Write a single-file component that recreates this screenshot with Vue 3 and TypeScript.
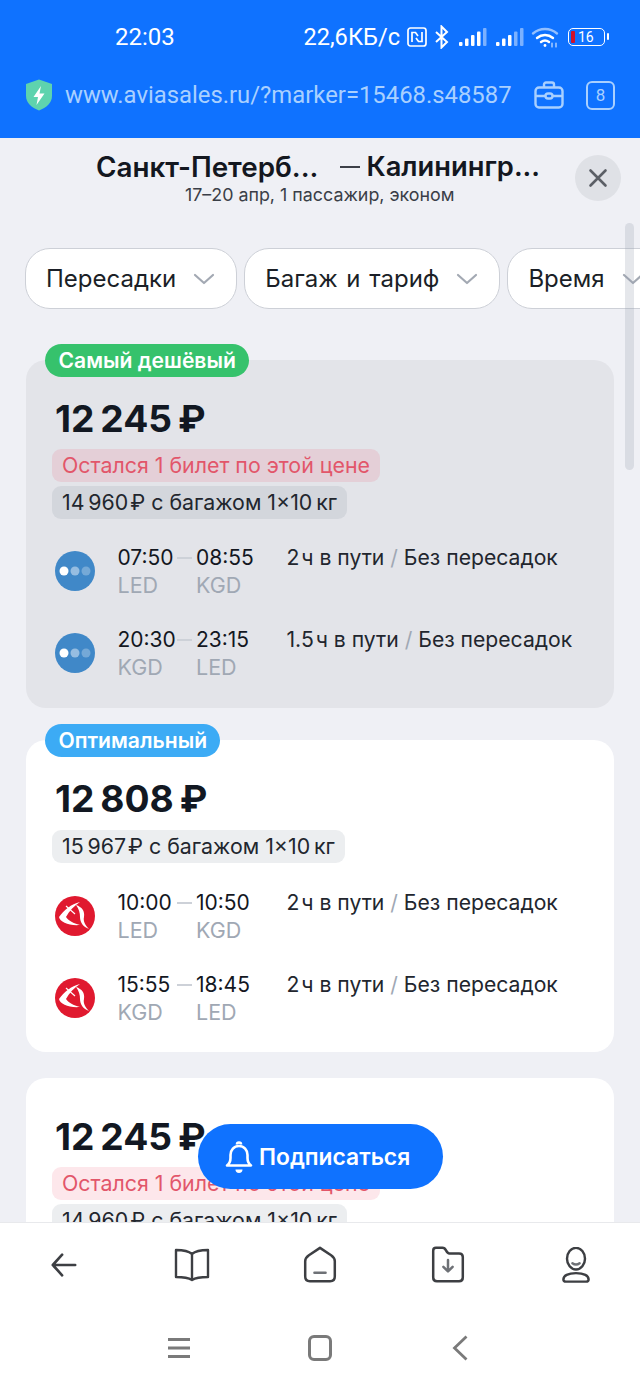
<template>
  <div class="phone">
    <header class="topbar">
      <div class="status">
        <span class="clock">22:03</span>
        <div class="status-right">
          <span class="speed">22,6КБ/с</span>
          <svg class="ic-nfc" width="20" height="20" viewBox="0 0 20 20" fill="none" stroke="#fff" stroke-width="1.7">
            <rect x="1" y="1" width="18" height="18" rx="2.5" />
            <path d="M5 15V5.500h3.500L11 9M15 5v9.500h-3.500L9 11" />
          </svg>
          <svg class="ic-bt" width="16" height="24" viewBox="0 0 16 24" fill="none" stroke="#fff" stroke-width="2">
            <path d="M2 7l11 10-5.500 5.500V1.500L13 7 2 17" />
          </svg>
          <svg v-for="n in 2" :key="n" class="ic-signal" width="28" height="18" viewBox="0 0 28 18">
            <rect x="0" y="14" width="3.500" height="4" rx="1" fill="#fff" />
            <rect x="6" y="10.500" width="3.500" height="7.500" rx="1" fill="#fff" />
            <rect x="12" y="7" width="3.500" height="11" rx="1" fill="#fff" />
            <rect x="18" y="3.500" width="3.500" height="14.500" rx="1" fill="#fff" :opacity="n === 1 ? 1 : 0.45" />
            <rect x="24" y="0" width="3.500" height="18" rx="1" fill="#fff" opacity="0.45" />
          </svg>
          <svg class="ic-wifi" width="28" height="22" viewBox="0 0 28 22" fill="none" stroke="#fff" stroke-width="2.400" stroke-linecap="round">
            <path d="M2 7.500C9 1.500 19 1.500 26 7.500" opacity="0.55" />
            <path d="M6 12c4.800-4 11.200-4 16 0" />
            <path d="M10 16c2.500-2 5.500-2 8 0" />
            <circle cx="14" cy="19.500" r="1.400" fill="#fff" stroke="none" />
            <path d="M21 17v4M25 17v4" stroke-width="1.200" opacity="0.8" />
          </svg>
          <div class="battery">
            <i class="battery-fill"></i>
            <span>16</span>
          </div>
        </div>
      </div>
      <div class="urlbar">
        <svg class="ic-shield" width="28" height="32" viewBox="0 0 28 32">
          <path d="M14 .5 27 5v12c0 7-5.500 11.500-13 14.500C6.500 28.500 1 24 1 17V5z" fill="#5ed3ae" />
          <path d="M16 7 8.500 18H13l-1.500 8L19.500 14.500H14.500z" fill="#fff" />
        </svg>
        <span class="url">www.aviasales.ru/?marker=15468.s48587</span>
        <svg class="ic-case" width="30" height="28" viewBox="0 0 30 28" fill="none" stroke="#a9d0ff" stroke-width="2.400">
          <rect x="1.500" y="6.500" width="27" height="20" rx="3.500" />
          <path d="M10 6.500V3.500A2 2 0 0 1 12 1.500h6a2 2 0 0 1 2 2v3M1.500 15H11.500M18.500 15H28.500" />
          <rect x="11.500" y="12.500" width="7" height="5" rx="2.500" />
        </svg>
        <div class="tabs">8</div>
      </div>
    </header>

    <main class="content">
      <div class="heading">
        <div class="titles">
          <div class="route">
            <span class="city">Санкт-Петерб...</span>
            <i class="route-dash"></i>
            <span class="city-to">Калинингр...</span>
          </div>
          <div class="trip">17–20 апр, 1 пассажир, эконом</div>
        </div>
        <button class="close" type="button">
          <svg width="20" height="20" viewBox="0 0 20 20" stroke="#5b5f66" stroke-width="2.600" stroke-linecap="round">
            <path d="M2.500 2.500l15 15M17.500 2.500l-15 15" />
          </svg>
        </button>
      </div>

      <div class="filters">
        <div v-for="f in filters" :key="f" class="chip">
          <span>{{ f }}</span>
          <svg width="22" height="12" viewBox="0 0 22 12" fill="none" stroke="#a3a9b3" stroke-width="2.200" stroke-linecap="round" stroke-linejoin="round">
            <path d="M2 2l9 8 9-8" />
          </svg>
        </div>
      </div>

      <div class="list">
        <article
          v-for="t in tickets"
          :key="t.id"
          class="card"
          :class="{ 'card-muted': t.muted, 'card-tagged': t.tag }"
        >
          <span v-if="t.tag" class="tag" :class="t.tagClass">{{ t.tag }}</span>
          <div class="price">{{ t.price }}</div>
          <div class="pills">
            <span v-if="t.lastSeat" class="pill pill-red">Остался 1 билет по этой цене</span>
            <span class="pill pill-grey">{{ t.baggage }} с багажом 1×10&#8201;кг</span>
          </div>
          <div v-for="s in t.segments" :key="s.from" class="segment">
            <svg v-if="t.airline === 'dots'" class="logo" width="40" height="40" viewBox="0 0 40 40">
              <circle cx="20" cy="20" r="20" fill="#4088c8" />
              <circle cx="9" cy="20" r="4.500" fill="#fff" />
              <circle cx="20" cy="20" r="4.500" fill="#fff" opacity="0.45" />
              <circle cx="31" cy="20" r="4.500" fill="#fff" opacity="0.28" />
            </svg>
            <svg v-else class="logo" width="40" height="40" viewBox="0 0 40 40">
              <circle cx="20" cy="20" r="20" fill="#e0192f" />
              <path d="M25 6C16 8 9 14 4 21 5 26 14 30 25 29 18 27 14 25 11 21 14 15 19 10 25 6Z" fill="#fff" />
              <path d="M21 9C27 11 30 15 29 21 28 25 30 29 34 33 28 31 25 26 25 21 25 17 24 13 21 9Z" fill="#fff" />
              <path d="M11 10 20 18" stroke="#fff" stroke-width="1.200" />
            </svg>
            <div class="stop">
              <span class="time">{{ s.dep }}</span>
              <span class="code">{{ s.from }}</span>
            </div>
            <i class="dash"></i>
            <div class="stop stop-arr">
              <span class="time">{{ s.arr }}</span>
              <span class="code">{{ s.to }}</span>
            </div>
            <div class="duration">{{ s.hours }} в пути <em>/</em> Без пересадок</div>
          </div>
        </article>
      </div>

      <i class="scrollbar"></i>

      <button class="subscribe" type="button">
        <svg width="28" height="34" viewBox="0 0 28 34" fill="none" stroke="#fff" stroke-width="2.600" stroke-linejoin="round">
          <path d="M2 25.500c2.500-2 3.500-4 3.500-7.500v-3C5.500 10 9 6 14 6s8.500 4 8.500 9v3c0 3.500 1 5.500 3.500 7.500z" />
          <path d="M12 4.500a2 2 0 0 1 4 0" />
          <path d="M10.500 29.500h7a3.500 3.500 0 0 1-7 0z" fill="#fff" stroke="none" />
        </svg>
        Подписаться
      </button>
    </main>

    <nav class="browser-nav">
      <svg width="28" height="28" viewBox="0 0 30 30" fill="none" stroke="#3d3f43" stroke-width="2.800" stroke-linecap="round" stroke-linejoin="round">
        <path d="M27 15H3M13 4 3 15l10 11" />
      </svg>
      <svg width="36" height="36" viewBox="0 0 36 36" fill="none" stroke="#3d3f43" stroke-width="2.400" stroke-linejoin="round">
        <path d="M18 7C14 3.500 8 3 2 3v27c6 0 12 .5 16 3 4-2.500 10-3 16-3V3c-6 0-12 .5-16 4zM18 7v26" />
      </svg>
      <svg width="36" height="37" viewBox="0 0 36 40" fill="none" stroke="#3d3f43" stroke-width="2.700" stroke-linejoin="round" stroke-linecap="round">
        <path d="M18 2 6 10c-2.500 1.800-4 3.500-4 6.500V33c0 3 1.500 5 5 5h22c3.500 0 5-2 5-5V16.500c0-3-1.500-4.700-4-6.500z" />
        <path d="M12 29h12" stroke="#6e7176" />
      </svg>
      <svg width="36" height="37" viewBox="0 0 36 40" fill="none" stroke="#3d3f43" stroke-width="2.700" stroke-linejoin="round" stroke-linecap="round">
        <path d="M2 5c0-2 1-3 3-3h7c2 0 3 1 4 3s1.500 3 3.500 3H30c3 0 4 1.500 4 4v22c0 2.500-1.500 4-4 4H6c-2.500 0-4-1.500-4-4z" />
        <path d="M18 15v12M13 22.500l5 5 5-5" stroke="#6e7176" />
      </svg>
      <svg width="32" height="36" viewBox="0 0 32 40" fill="none" stroke="#3d3f43" stroke-width="2.700" stroke-linecap="round">
        <ellipse cx="16" cy="13" rx="10" ry="12" />
        <path d="M12 18c2.500 1.800 5.500 1.800 8 0" stroke="#6e7176" />
        <path d="M2 36c0-4 5-7 14-7s14 3 14 7c0 1.500-1 2.500-3 2.500H5C3 38.500 2 37.500 2 36z" />
      </svg>
    </nav>

    <nav class="system-nav">
      <svg width="24" height="22" viewBox="0 0 24 22" stroke="#7a7a7a" stroke-width="3">
        <path d="M1 2.500h22M1 11h22M1 19.500h22" />
      </svg>
      <svg width="24" height="26" viewBox="0 0 24 26" fill="none" stroke="#7a7a7a" stroke-width="3">
        <rect x="1.500" y="1.500" width="21" height="23" rx="4.500" />
      </svg>
      <svg width="16" height="26" viewBox="0 0 16 26" fill="none" stroke="#7a7a7a" stroke-width="2.800">
        <path d="M14.500 1.500 2.500 13l12 11.500" />
      </svg>
    </nav>
  </div>
</template>

<script setup lang="ts">
interface Segment {
  dep: string
  arr: string
  from: string
  to: string
  hours: string
}

interface Ticket {
  id: number
  price: string
  baggage: string
  lastSeat: boolean
  muted?: boolean
  tag?: string
  tagClass?: string
  airline: 'dots' | 'swoosh'
  segments: Segment[]
}

const filters = ['Пересадки', 'Багаж и тариф', 'Время']

const tickets: Ticket[] = [
  {
    id: 1,
    price: '12\u2009245\u2009₽',
    baggage: '14\u2009960\u200a₽',
    lastSeat: true,
    muted: true,
    tag: 'Самый дешёвый',
    tagClass: 'tag-green',
    airline: 'dots',
    segments: [
      { dep: '07:50', arr: '08:55', from: 'LED', to: 'KGD', hours: '2\u200aч' },
      { dep: '20:30', arr: '23:15', from: 'KGD', to: 'LED', hours: '1.5\u200aч' },
    ],
  },
  {
    id: 2,
    price: '12\u2009808\u2009₽',
    baggage: '15\u2009967\u200a₽',
    lastSeat: false,
    tag: 'Оптимальный',
    tagClass: 'tag-blue',
    airline: 'swoosh',
    segments: [
      { dep: '10:00', arr: '10:50', from: 'LED', to: 'KGD', hours: '2\u200aч' },
      { dep: '15:55', arr: '18:45', from: 'KGD', to: 'LED', hours: '2\u200aч' },
    ],
  },
  {
    id: 3,
    price: '12\u2009245\u2009₽',
    baggage: '14\u2009960\u200a₽',
    lastSeat: true,
    airline: 'dots',
    segments: [],
  },
]
</script>

<style>
html,
body {
  margin: 0;
  background: #fff;
}
</style>

<style scoped>
.phone {
  width: 640px;
  height: 1387px;
  display: flex;
  flex-direction: column;
  overflow: hidden;
  font-family: Inter, "Noto Sans", sans-serif;
  color: #13171f;
}

.topbar {
  height: 138px;
  flex: none;
  background: #0f72ff;
  color: #fff;
  box-sizing: border-box;
  padding-top: 20px;
}

.status {
  height: 34px;
  display: flex;
  align-items: center;
  justify-content: space-between;
  padding: 0 35px 0 115px;
  font-family: Roboto, sans-serif;
  font-size: 24px;
}

.status-right {
  display: flex;
  align-items: center;
}

.speed {
  margin-right: 7px;
  font-size: 23.600px;
}

.ic-nfc {
  margin-right: 7px;
}

.ic-bt {
  margin-right: 9px;
}

.ic-signal {
  margin-right: 9px;
}

.ic-wifi {
  margin: 0 9px 0 -2px;
}

.battery {
  width: 37px;
  height: 18px;
  box-sizing: border-box;
  border: 1.5px solid #fff;
  border-radius: 5px;
  display: flex;
  align-items: center;
  font-size: 14px;
  position: relative;
  padding-left: 2px;
}

.battery::after {
  content: "";
  position: absolute;
  right: -5px;
  top: 4px;
  width: 2px;
  height: 7px;
  background: #fff;
  border-radius: 1px;
}

.battery-fill {
  width: 4px;
  height: 12px;
  background: #d0112b;
  border-radius: 1px;
  margin-right: 3px;
}

.urlbar {
  display: flex;
  align-items: center;
  height: 40px;
  margin-top: 21px;
  padding-left: 25px;
}

.ic-shield {
  margin-right: 12px;
}

.url {
  width: 469px;
  white-space: nowrap;
  font-family: Roboto, sans-serif;
  font-size: 23.850px;
  color: #a9d0ff;
}

.tabs {
  width: 29px;
  height: 29px;
  margin-left: 22px;
  box-sizing: border-box;
  border: 2.200px solid #a9d0ff;
  border-radius: 6px;
  display: flex;
  align-items: center;
  justify-content: center;
  font-family: Roboto, sans-serif;
  font-size: 17px;
  color: #a9d0ff;
}

.content {
  flex: 1;
  min-height: 0;
  position: relative;
  overflow: hidden;
  background: #eff0f5;
}

.heading {
  height: 110px;
  box-sizing: border-box;
  padding: 16px 19px 0 0;
  display: flex;
  align-items: flex-start;
}

.titles {
  flex: 1;
  padding-left: 96px;
}

.route {
  display: flex;
  align-items: center;
  font-size: 27.800px;
  line-height: 26px;
  font-weight: 600;
  color: #13171f;
  white-space: nowrap;
}

.city {
  margin-right: 22px;
}

.city-to {
  font-size: 27.300px;
}

.route-dash {
  width: 20px;
  height: 1.500px;
  background: #3d4048;
  margin-right: 6px;
}

.trip {
  margin: 4px 0 0 89px;
  font-size: 17.850px;
  line-height: 22px;
  color: #3a3e47;
}

.close {
  width: 46px;
  height: 46px;
  margin-top: 1px;
  padding: 0;
  border: 0;
  border-radius: 50%;
  background: #dfe1e6;
  display: flex;
  align-items: center;
  justify-content: center;
}

.filters {
  display: flex;
  gap: 7px;
  padding-left: 25px;
  width: 800px;
}

.chip {
  flex: none;
  height: 61px;
  box-sizing: border-box;
  padding: 0 21px 0 20px;
  display: flex;
  align-items: center;
  gap: 17px;
  background: #fff;
  border: 1.800px solid #cdd0d7;
  border-radius: 25px;
  font-size: 24px;
  word-spacing: 2px;
  color: #1b1f27;
}

.list {
  padding: 51px 26px 0;
  display: flex;
  flex-direction: column;
  gap: 26px;
}

.card {
  position: relative;
  flex: none;
  background: #fff;
  border-radius: 20px;
  padding: 36px 0 25px 26px;
}

.card-muted {
  background: #e3e4e9;
  padding-bottom: 26px;
}

.card-tagged + .card-tagged {
  margin-top: 6px;
}

.tag {
  position: absolute;
  left: 19px;
  top: -16px;
  height: 32px;
  padding: 0 13px 1px 13.500px;
  display: flex;
  align-items: center;
  border-radius: 17px;
  font-size: 21.100px;
  font-weight: 600;
  color: #fff;
}

.tag-green {
  background: #36c26c;
}

.tag-blue {
  background: #3cabf5;
}

.price {
  margin-left: 3px;
  font-size: 37.200px;
  line-height: 46px;
  font-weight: 700;
  color: #121822;
}

.pills {
  margin-top: 7px;
  display: flex;
  flex-direction: column;
  align-items: flex-start;
  gap: 3px;
}

.pill {
  height: 31px;
  padding: 0 10px 2px;
  display: flex;
  align-items: center;
  border-radius: 9px;
  font-size: 21.350px;
}

.pill-red {
  background: rgba(240, 60, 90, 0.12);
  color: #e2566a;
}

.pill-grey {
  background: rgba(100, 115, 135, 0.12);
  color: #22262e;
}

.pill-grey:only-child {
  margin-top: 1px;
}

.pill-red + .pill-grey {
  margin: 1px 0 -1px;
}

.segment {
  display: flex;
  align-items: flex-start;
  height: 56px;
  margin-top: 26px;
  margin-left: 3px;
}

.logo {
  flex: none;
  margin: 6.500px 22.500px 0 0;
}

.stop {
  width: 59.500px;
  display: flex;
  flex-direction: column;
  font-size: 21px;
  line-height: 28px;
}

.stop-arr {
  width: 90.500px;
}

.code {
  font-size: 21.500px;
  line-height: 27.500px;
  color: #a0a8b4;
}

.dash {
  width: 15px;
  height: 1.500px;
  margin: 13px 4px 0 0;
  background: #cdd1d8;
}

.duration {
  font-size: 21.150px;
  line-height: 28px;
  white-space: nowrap;
  color: #22262e;
}

.duration em {
  font-style: normal;
  color: #a0a8b4;
}

.scrollbar {
  position: absolute;
  left: 625px;
  top: 85px;
  width: 9px;
  height: 247px;
  border-radius: 5px;
  background: rgba(150, 160, 175, 0.25);
}

.subscribe {
  position: absolute;
  left: 198px;
  top: 986px;
  width: 245px;
  height: 65px;
  border: 0;
  padding: 0 0 0 27px;
  border-radius: 33px;
  background: #0f72ff;
  color: #fff;
  font-family: Inter, sans-serif;
  font-size: 22.800px;
  font-weight: 600;
  display: flex;
  align-items: center;
  gap: 6px;
}

.browser-nav {
  height: 84px;
  flex: none;
  box-sizing: border-box;
  border-top: 1.500px solid #e8e9ec;
  background: #fff;
  display: grid;
  grid-template-columns: repeat(5, 128px);
  justify-items: center;
  align-items: center;
}

.system-nav {
  height: 81px;
  flex: none;
  box-sizing: border-box;
  padding-top: 3px;
  background: #fff;
  display: grid;
  grid-template-columns: repeat(3, 141px);
  justify-content: center;
  justify-items: center;
  align-items: center;
}

.system-nav svg:last-child {
  margin-right: 3px;
}
</style>
